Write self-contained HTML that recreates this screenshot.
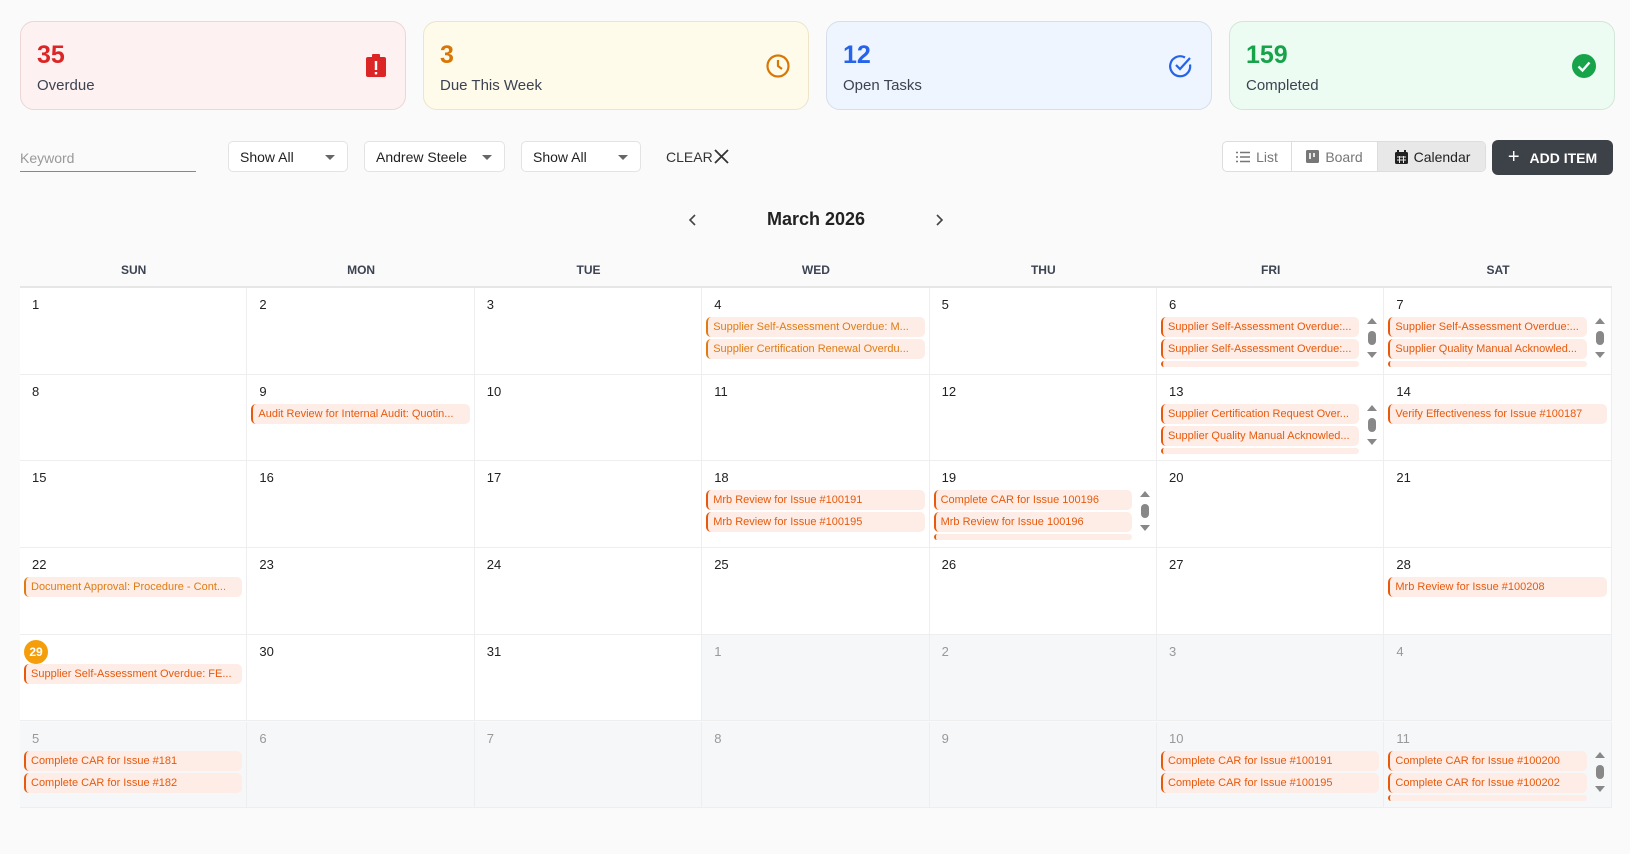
<!DOCTYPE html>
<html><head><meta charset="utf-8"><style>
*{box-sizing:border-box;margin:0;padding:0}
body{width:1630px;height:854px;background:#fafafa;font-family:"Liberation Sans",sans-serif;color:#222;position:relative;overflow:hidden}
.card{position:absolute;top:21px;width:386px;height:89px;border-radius:14px;border:1px solid #ddd}
.card .n{position:absolute;left:16px;top:19px;font-size:25px;font-weight:bold}
.card .l{position:absolute;left:16px;top:55px;font-size:15px;color:#3c4351}
.card svg{position:absolute;right:18px;top:32px}
.dd{position:absolute;top:141px;height:31px;border:1px solid #e3e3e3;border-radius:5px;background:#fff;font-size:14px;padding:7px 11px;color:#222}
.dd:after{content:"";position:absolute;right:12px;top:13px;border:5px solid transparent;border-top-color:#666;border-bottom:0}
.tg{position:absolute;top:0;height:29px;font-size:14px;color:#777;display:flex;align-items:center;gap:6px;justify-content:center}
.hd{position:absolute;top:263px;width:227.4px;text-align:center;font-size:12px;font-weight:bold;color:#3c4351}
.cell{position:absolute;width:227.4px;height:86.7px;background:#fff;border-right:1px solid #eee;border-bottom:1px solid #eee}
.cell.o{background:#f6f7f9}
.cell .d{position:absolute;left:12px;top:9px;font-size:13px;color:#222}
.cell.o .d{color:#999}
.ev{position:absolute;left:4px;right:4px;height:20px;background:#fdede6;border-left:2px solid #e8590c;border-radius:5px;color:#e8590c;font-size:11px;line-height:20px;padding-left:5px;white-space:nowrap;overflow:hidden;text-overflow:ellipsis}
.ev.a{color:#e07b12;border-color:#e07b12}
.s .ev{right:24px}
.e1{top:29px}.e2{top:51px}.e3{top:73px;height:6px}
.sb{position:absolute;right:6px;top:30px;width:10px;height:40px}
.sb:before{content:"";position:absolute;left:0;top:0;border:5px solid transparent;border-bottom:6px solid #888;border-top:0}
.sb:after{content:"";position:absolute;left:0;bottom:0;border:5px solid transparent;border-top:6px solid #888;border-bottom:0}
.sb i{position:absolute;left:1px;top:13px;width:8px;height:14px;border-radius:4px;background:#888}
</style></head><body>
<div class="card" style="left:20px;background:#fef1f1;border-color:#ecd6d6"><div class="n" style="color:#dc2626">35</div><div class="l">Overdue</div>
<svg width="22" height="24" viewBox="0 0 22 24"><rect x="1" y="3" width="20" height="20" rx="2" fill="#dc2626"/><rect x="7" y="0" width="8" height="5" rx="1" fill="#dc2626"/><rect x="9.8" y="7" width="2.4" height="9" fill="#fff"/><rect x="9.8" y="18" width="2.4" height="2.4" fill="#fff"/></svg></div>
<div class="card" style="left:423px;background:#fefbea;border-color:#eee4c8"><div class="n" style="color:#d97706">3</div><div class="l">Due This Week</div>
<svg width="24" height="24" viewBox="0 0 24 24" fill="none" stroke="#d97706" stroke-width="2.2"><circle cx="12" cy="12" r="10.5"/><path d="M12 6v6l4 3"/></svg></div>
<div class="card" style="left:826px;background:#eef5ff;border-color:#d5deea"><div class="n" style="color:#2563eb">12</div><div class="l">Open Tasks</div>
<svg width="24" height="24" viewBox="0 0 24 24" fill="none" stroke="#2563eb" stroke-width="2.2"><path d="M21 10.5A10 10 0 1 1 16 3.5"/><path d="M7 11l4 4 10-11"/></svg></div>
<div class="card" style="left:1229px;background:#edfcf2;border-color:#d4e5da"><div class="n" style="color:#16a34a">159</div><div class="l">Completed</div>
<svg width="24" height="24" viewBox="0 0 24 24"><circle cx="12" cy="12" r="12" fill="#16a34a"/><path d="M6.5 12.5l4 4 7-8" fill="none" stroke="#fff" stroke-width="2.4"/></svg></div>

<div style="position:absolute;left:20px;top:150px;font-size:14px;color:#999">Keyword</div>
<div style="position:absolute;left:20px;top:171px;width:176px;height:1px;background:#888"></div>
<div class="dd" style="left:228px;width:120px">Show All</div>
<div class="dd" style="left:364px;width:141px">Andrew Steele</div>
<div class="dd" style="left:521px;width:120px">Show All</div>
<div style="position:absolute;left:666px;top:149px;font-size:14px;color:#333">CLEAR</div>
<svg style="position:absolute;left:714px;top:149px" width="15" height="15" viewBox="0 0 15 15"><path d="M1 1l13 13M14 1L1 14" stroke="#333" stroke-width="1.8"/></svg>

<div style="position:absolute;left:1222px;top:141px;width:264px;height:31px;border:1px solid #ddd;border-radius:5px;background:#fff;overflow:hidden">
<div class="tg" style="left:0;width:69px;border-right:1px solid #ddd"><svg width="14" height="12"><path d="M0 1.5h2M4 1.5h10M0 6h2M4 6h10M0 10.5h2M4 10.5h10" stroke="#777" stroke-width="1.4"/></svg>List</div>
<div class="tg" style="left:69px;width:86px;border-right:1px solid #ddd"><svg width="13" height="13"><rect width="13" height="13" rx="1.5" fill="#777"/><path d="M4 3v6M8 3v4" stroke="#fff" stroke-width="1.6"/></svg>Board</div>
<div class="tg" style="left:155px;width:109px;background:#e8e8e8;color:#222"><svg width="13" height="14"><rect y="2" width="13" height="12" rx="1.5" fill="#222"/><rect x="2" y="0" width="2" height="3" fill="#222"/><rect x="9" y="0" width="2" height="3" fill="#222"/><path d="M2 7h9M2 10h9M4.5 6v7M8.5 6v7" stroke="#e8e8e8" stroke-width="1"/></svg>Calendar</div>
</div>
<div style="position:absolute;left:1492px;top:140px;width:121px;height:35px;border-radius:6px;background:#3d4148;color:#fff;font-size:14px;font-weight:bold;display:flex;align-items:center;justify-content:center;gap:10px"><span style="font-size:20px;font-weight:normal">+</span>ADD ITEM</div>

<svg style="position:absolute;left:688px;top:213px" width="10" height="14"><path d="M7 2L2 7l5 5" fill="none" stroke="#444" stroke-width="1.6"/></svg>
<div style="position:absolute;left:716px;top:209px;width:200px;text-align:center;font-size:18px;font-weight:bold;color:#222">March 2026</div>
<svg style="position:absolute;left:934px;top:213px" width="10" height="14"><path d="M3 2l5 5-5 5" fill="none" stroke="#444" stroke-width="1.6"/></svg>

<div class="hd" style="left:20px">SUN</div><div class="hd" style="left:247.4px">MON</div><div class="hd" style="left:474.8px">TUE</div><div class="hd" style="left:702.2px">WED</div><div class="hd" style="left:929.6px">THU</div><div class="hd" style="left:1157px">FRI</div><div class="hd" style="left:1384.4px">SAT</div>
<div style="position:absolute;left:20px;top:286px;width:1592px;height:2px;background:#e6e6e6"></div>

<div id="g"></div>
<script>
var R=[
[["1"],["2"],["3"],["4",["Supplier Self-Assessment Overdue: M...","Supplier Certification Renewal Overdu..."],0,"a"],["5"],["6",["Supplier Self-Assessment Overdue:...","Supplier Self-Assessment Overdue:..."],1],["7",["Supplier Self-Assessment Overdue:...","Supplier Quality Manual Acknowled..."],1]],
[["8"],["9",["Audit Review for Internal Audit: Quotin..."]],["10"],["11"],["12"],["13",["Supplier Certification Request Over...","Supplier Quality Manual Acknowled..."],1],["14",["Verify Effectiveness for Issue #100187"]]],
[["15"],["16"],["17"],["18",["Mrb Review for Issue #100191","Mrb Review for Issue #100195"]],["19",["Complete CAR for Issue 100196","Mrb Review for Issue 100196"],1],["20"],["21"]],
[["22",["Document Approval: Procedure - Cont..."],0,"a"],["23"],["24"],["25"],["26"],["27"],["28",["Mrb Review for Issue #100208"]]],
[["29",["Supplier Self-Assessment Overdue: FE..."]],["30"],["31"],["1",0,0,0,1],["2",0,0,0,1],["3",0,0,0,1],["4",0,0,0,1]],
[["5",["Complete CAR for Issue #181","Complete CAR for Issue #182"],0,0,1],["6",0,0,0,1],["7",0,0,0,1],["8",0,0,0,1],["9",0,0,0,1],["10",["Complete CAR for Issue #100191","Complete CAR for Issue #100195"],0,0,1],["11",["Complete CAR for Issue #100200","Complete CAR for Issue #100202"],1,0,1]]];
var h="";
R.forEach(function(row,r){row.forEach(function(c,i){
var x=20+i*227.4,y=288+r*86.7;
h+='<div class="cell'+(c[4]?' o':'')+(c[2]?' s':'')+'" style="left:'+x+'px;top:'+y+'px">';
if(r==4&&i==0)h+='<div style="position:absolute;left:4px;top:5px;width:24px;height:24px;border-radius:50%;background:#f59e0b;color:#fff;font-size:12px;font-weight:bold;text-align:center;line-height:24px">29</div>';
else h+='<div class="d">'+c[0]+'</div>';
if(c[1])c[1].forEach(function(t,k){h+='<div class="ev e'+(k+1)+(c[3]?' a':'')+'">'+t+'</div>'});
if(c[2])h+='<div class="ev e3"></div><div class="sb"><i></i></div>';
h+='</div>';});});
document.getElementById("g").innerHTML=h;
</script>
</body></html>
